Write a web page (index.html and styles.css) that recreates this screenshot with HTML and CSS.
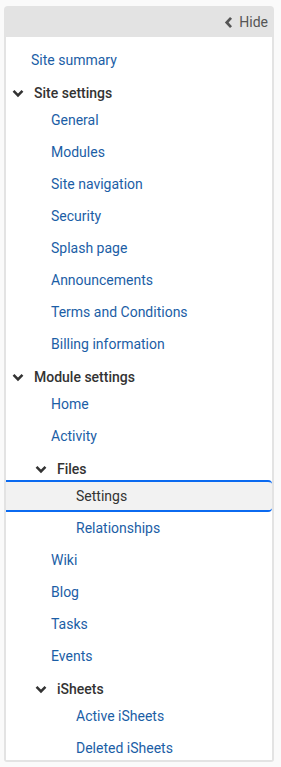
FILE: index.html
```html
<!DOCTYPE html>
<html lang="en">
<head>
    <meta charset="UTF-8">
    <meta name="viewport" content="width=device-width, initial-scale=1.0">
    <title>Settings navigation</title>
    <link rel="stylesheet" href="styles.css">
</head>
<body>
    <div class="panel">
        <div class="panel-head">
            <button class="hide-btn">
                <svg class="chev-left" viewBox="0 0 10 14" width="9" height="13"><path d="M7.8 1.8 L3 7 L7.8 12.2" fill="none" stroke="currentColor" stroke-width="3"/></svg>
                Hide
            </button>
        </div>
        <nav class="panel-body">
            <a class="item top" href="#">Site summary</a>

            <div class="group">
                <svg class="chev" viewBox="0 0 14 10" width="12" height="9"><path d="M1.8 2 L7 7.2 L12.2 2" fill="none" stroke="currentColor" stroke-width="3"/></svg>
                Site settings
            </div>
            <a class="item lvl1" href="#">General</a>
            <a class="item lvl1" href="#">Modules</a>
            <a class="item lvl1" href="#">Site navigation</a>
            <a class="item lvl1" href="#">Security</a>
            <a class="item lvl1" href="#">Splash page</a>
            <a class="item lvl1" href="#">Announcements</a>
            <a class="item lvl1" href="#">Terms and Conditions</a>
            <a class="item lvl1" href="#">Billing information</a>

            <div class="group">
                <svg class="chev" viewBox="0 0 14 10" width="12" height="9"><path d="M1.8 2 L7 7.2 L12.2 2" fill="none" stroke="currentColor" stroke-width="3"/></svg>
                Module settings
            </div>
            <a class="item lvl1" href="#">Home</a>
            <a class="item lvl1" href="#">Activity</a>

            <div class="group sub">
                <svg class="chev" viewBox="0 0 14 10" width="12" height="9"><path d="M1.8 2 L7 7.2 L12.2 2" fill="none" stroke="currentColor" stroke-width="3"/></svg>
                Files
            </div>
            <a class="item lvl2 active" href="#">Settings</a>
            <a class="item lvl2" href="#">Relationships</a>

            <a class="item lvl1" href="#">Wiki</a>
            <a class="item lvl1" href="#">Blog</a>
            <a class="item lvl1" href="#">Tasks</a>
            <a class="item lvl1" href="#">Events</a>

            <div class="group sub">
                <svg class="chev" viewBox="0 0 14 10" width="12" height="9"><path d="M1.8 2 L7 7.2 L12.2 2" fill="none" stroke="currentColor" stroke-width="3"/></svg>
                iSheets
            </div>
            <a class="item lvl2" href="#">Active iSheets</a>
            <a class="item lvl2" href="#">Deleted iSheets</a>
        </nav>
    </div>
</body>
</html>
```

FILE: styles.css
```css
* {
    margin: 0;
    padding: 0;
    box-sizing: border-box;
}

body {
    font-family: Roboto, 'Noto Sans', Arial, sans-serif;
    font-size: 14px;
    background: #fafafa;
    color: #333;
    padding: 6px 7px 5px 4px;
}

.panel {
    background: #e3e3e3;
    border-radius: 4px 4px 3px 3px;
    padding: 0 2px 2px 2px;
    height: 756px;
    display: flex;
    flex-direction: column;
}

.panel-head {
    height: 31px;
    flex-shrink: 0;
    display: flex;
    justify-content: flex-end;
    align-items: center;
}

.hide-btn {
    background: none;
    border: none;
    font-family: inherit;
    font-size: 14px;
    color: #555;
    display: flex;
    align-items: center;
    gap: 6px;
    padding: 0 4px 0 0;
    margin-top: 1px;
    cursor: pointer;
}

.chev-left {
    color: #555;
}

.panel-body {
    background: #fff;
    flex: 1;
    overflow: hidden;
    padding-top: 7px;
    display: flex;
    flex-direction: column;
}

.item {
    display: flex;
    align-items: center;
    flex-shrink: 0;
    height: 32px;
    color: #1b5ea6;
    text-decoration: none;
    white-space: nowrap;
}

.item.top {
    padding-left: 25px;
}

.item.lvl1 {
    padding-left: 45px;
}

.item.lvl2 {
    padding-left: 70px;
}

.item.active {
    background: #f2f2f2;
    color: #333;
    border-top: 2px solid #0b6af0;
    border-bottom: 2px solid #0b6af0;
    border-radius: 0 4px 4px 0;
}

.group {
    display: flex;
    align-items: center;
    flex-shrink: 0;
    height: 28px;
    padding-top: 6px;
    padding-left: 6px;
    gap: 10px;
    font-weight: 500;
    color: #333;
    white-space: nowrap;
}

.group.sub {
    padding-left: 29px;
    gap: 10px;
}

.chev {
    color: #333;
}
```
